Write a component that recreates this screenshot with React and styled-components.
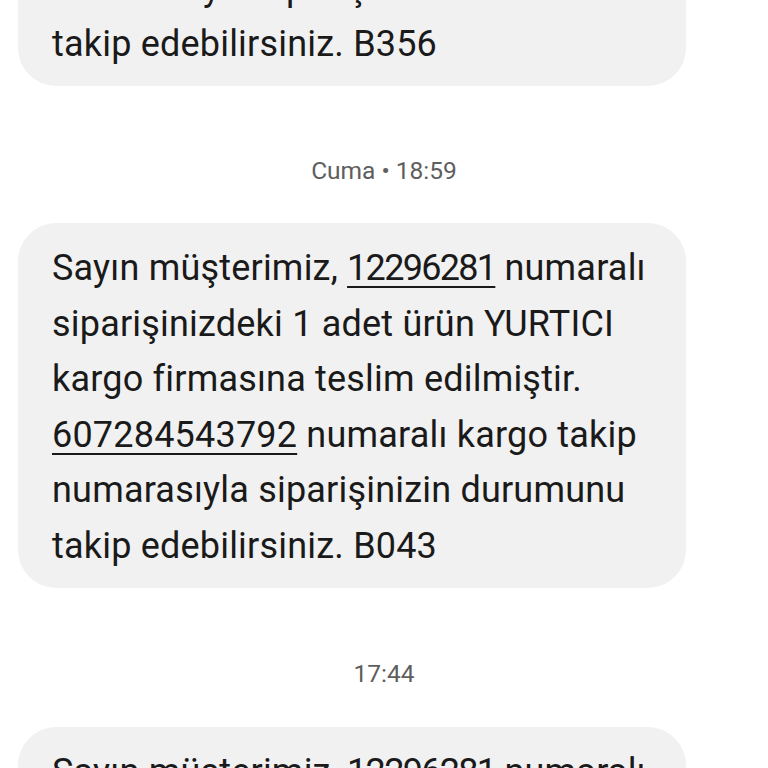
import React from 'react';
import styled, { createGlobalStyle } from 'styled-components';

const Global = createGlobalStyle`
  html, body { margin: 0; padding: 0; background: #ffffff; }
  body { overflow: hidden; }
`;

const Thread = styled.div`
  width: 768px;
  height: 768px;
  overflow: hidden;
  display: flex;
  flex-direction: column;
  font-family: Roboto, "Noto Sans", sans-serif;
`;

const Offset = styled.div`
  margin-top: ${(p) => p.$shift}px;
  display: flex;
  flex-direction: column;
`;

const Bubble = styled.div`
  margin-left: 18px;
  width: 668px;
  box-sizing: border-box;
  background: #f1f1f1;
  border-radius: 38px;
  padding: 18px 0 14px 34px;
  color: #1a1a1a;
  font-size: 36px;
  letter-spacing: 0.2px;
  line-height: 55.5px;
`;

const Line = styled.div`
  white-space: nowrap;
`;

const Num = styled.span`
  text-decoration: underline;
  text-decoration-thickness: 2px;
  text-underline-offset: 6px;
  letter-spacing: ${(p) => (p.$tight ? '-1.7px' : '0.2px')};
`;

const Stamp = styled.div`
  text-align: center;
  color: #5e5e5e;
  font-size: 24.5px;
  line-height: 30px;
  padding: ${(p) => p.$top}px 0 ${(p) => p.$bottom}px;
`;

const Message = ({ order, cargo, code }) => (
  <Bubble>
    <Line>
      Sayın müşterimiz, <Num $tight>{order}</Num> numaralı
    </Line>
    <Line>siparişinizdeki 1 adet ürün YURTICI</Line>
    <Line>kargo firmasına teslim edilmiştir.</Line>
    <Line>
      <Num>{cargo}</Num> numaralı kargo takip
    </Line>
    <Line>numarasıyla siparişinizin durumunu</Line>
    <Line>takip edebilirsiniz. {code}</Line>
  </Bubble>
);

export default function App() {
  return (
    <>
      <Global />
      <Thread>
        <Offset $shift={-279}>
          <Message order="12296281" cargo="607284543791" code="B356" />
        </Offset>
        <Stamp $top={70} $bottom={37}>Cuma • 18:59</Stamp>
        <Message order="12296281" cargo="607284543792" code="B043" />
        <Stamp $top={71} $bottom={38}>17:44</Stamp>
        <Message order="12296281" cargo="607284543790" code="B021" />
      </Thread>
    </>
  );
}
